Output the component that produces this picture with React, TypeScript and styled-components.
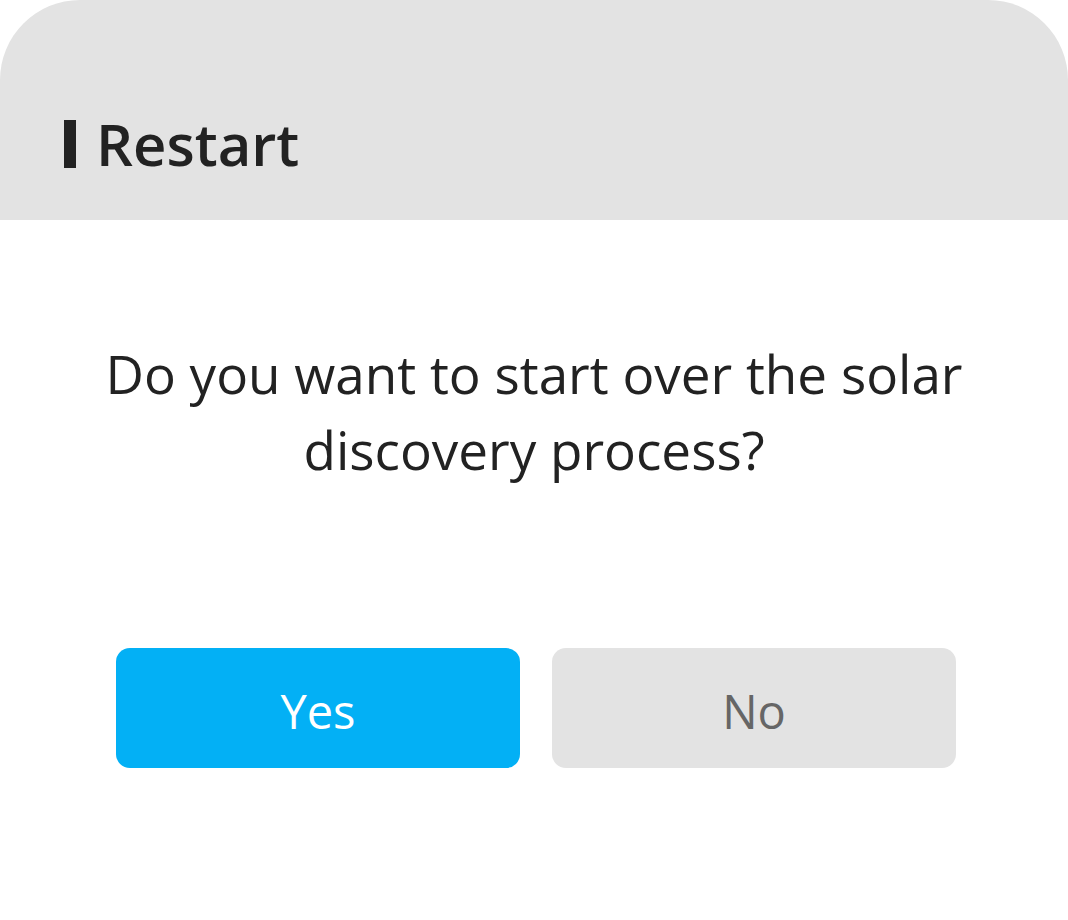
import React from "react";
import styled, { createGlobalStyle } from "styled-components";

const Global = createGlobalStyle`
  html, body { margin: 0; padding: 0; background: #ffffff; }
  body { font-family: "Open Sans", "Noto Sans", sans-serif; }
`;

const Dialog = styled.div`
  width: 1068px;
  height: 920px;
  background: #ffffff;
  display: flex;
  flex-direction: column;
`;

const Header = styled.header`
  height: 220px;
  box-sizing: border-box;
  background: #e3e3e3;
  border-radius: 80px 80px 0 0;
  display: flex;
  align-items: flex-end;
  padding: 0 0 52px 64px;
`;

const TitleBar = styled.span`
  width: 12px;
  height: 48px;
  background: #222222;
  margin-right: 20px;
`;

const Title = styled.h1`
  margin: 0;
  font-size: 58px;
  font-weight: 600;
  color: #222222;
  line-height: 48px;
`;

const Message = styled.p`
  margin: 116px 0 0;
  padding: 0 70px;
  text-align: center;
  font-size: 53px;
  font-weight: 400;
  line-height: 76px;
  color: #222222;
`;

const Actions = styled.div`
  display: flex;
  gap: 32px;
  justify-content: center;
  margin-top: 160px;
  padding-left: 4px;
`;

const Button = styled.button<{ $primary?: boolean }>`
  width: 404px;
  height: 120px;
  border: none;
  border-radius: 14px;
  padding: 6px 0 0;
  font-family: "Open Sans", "Noto Sans", sans-serif;
  font-size: 47px;
  font-weight: 400;
  background: ${(p) => (p.$primary ? "#03b0f5" : "#e3e3e3")};
  color: ${(p) => (p.$primary ? "#ffffff" : "#666666")};
  cursor: pointer;
`;

export default function App() {
  return (
    <>
      <Global />
      <Dialog>
        <Header>
          <TitleBar />
          <Title>Restart</Title>
        </Header>
        <Message>Do you want to start over the solar discovery process?</Message>
        <Actions>
          <Button $primary>Yes</Button>
          <Button>No</Button>
        </Actions>
      </Dialog>
    </>
  );
}
